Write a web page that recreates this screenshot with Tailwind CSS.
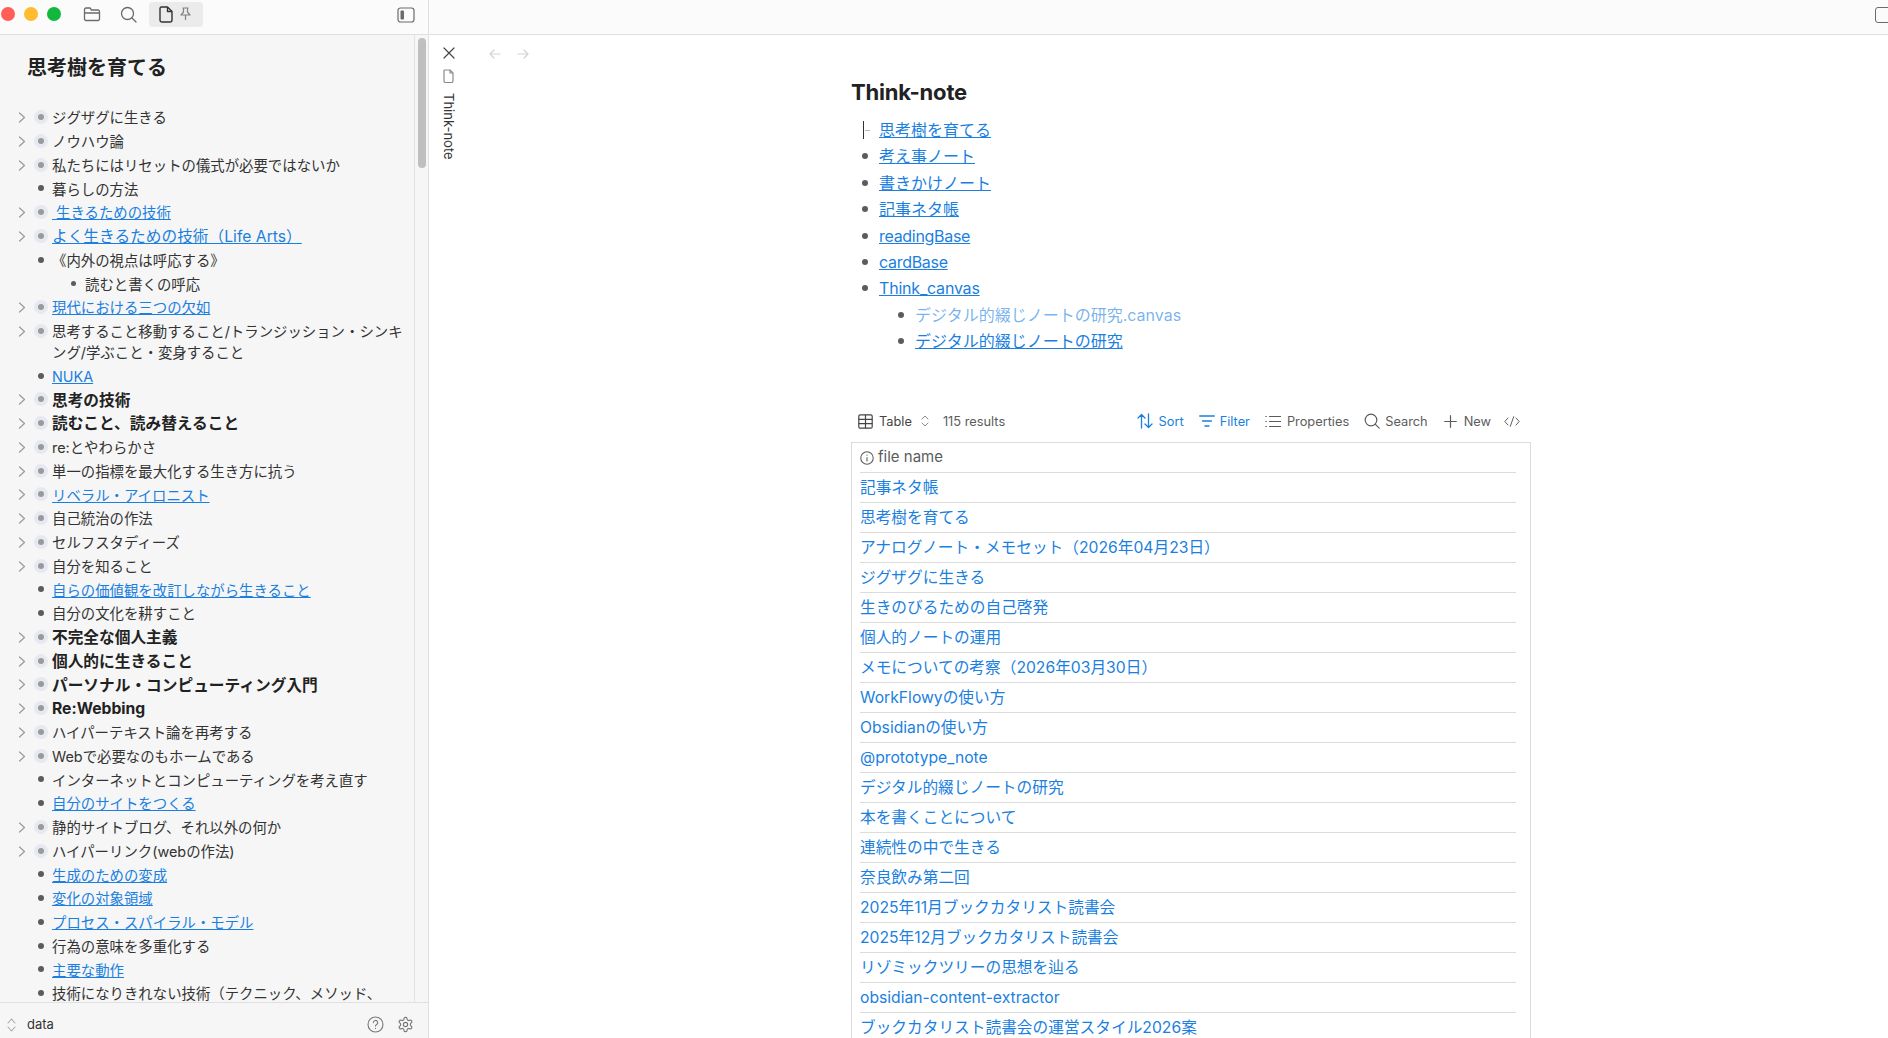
<!DOCTYPE html>
<html lang="ja">
<head>
    <meta charset="UTF-8"/>
    <script src="https://cdn.jsdelivr.net/npm/@tailwindcss/browser@4"></script>
    <title>Think-note</title>
</head>
<body class="bg-white overflow-hidden font-['Inter','Noto_Sans_CJK_JP',sans-serif] text-[#222]">
<div class="flex h-[1038px] w-[1888px] overflow-hidden">
    <aside class="w-[429px] shrink-0 h-full flex flex-col bg-[#f6f6f6] border-r border-[#e0e0e0]">
        <div class="h-[35px] shrink-0 pb-[6px] bg-[#fbfbfb] border-b border-[#e0e0e0] flex items-center relative">
            <span class="ml-[1px] w-[14px] h-[14px] rounded-full bg-[#ff5f57]"></span>
            <span class="ml-[9px] w-[14px] h-[14px] rounded-full bg-[#febc2e]"></span>
            <span class="ml-[9px] w-[14px] h-[14px] rounded-full bg-[#12b83c]"></span>
            <svg class="ml-[22px] w-[18px] h-[18px]" viewBox="0 0 18 18" fill="none" stroke="#6b6b6b" stroke-width="1.3" stroke-linejoin="round"><path d="M1.5 5V14a1.5 1.5 0 0 0 1.5 1.5h12a1.5 1.5 0 0 0 1.5-1.5V6.5A1.5 1.5 0 0 0 15 5H8.5L7 3H3A1.5 1.5 0 0 0 1.5 4.5V8h15"/></svg>
            <svg class="ml-[19px] w-[17px] h-[17px]" viewBox="0 0 17 17" fill="none" stroke="#6b6b6b" stroke-width="1.3" stroke-linecap="round"><circle cx="7.5" cy="7.5" r="6"/><path d="M12 12l4 4"/></svg>
            <div class="ml-[12px] w-[54px] h-[25px] rounded-[4px] bg-[#ebebeb] flex items-center pl-[10px]">
                <svg class="w-[14px] h-[17px]" viewBox="0 0 14 17" fill="none" stroke="#333" stroke-width="1.4" stroke-linejoin="round"><path d="M2.5 1h6l4.5 4.5V14a2 2 0 0 1-2 2H3a2 2 0 0 1-2-2V2.5A1.5 1.5 0 0 1 2.5 1z"/><path d="M8.5 1v4.5H13"/></svg>
                <svg class="ml-[7px] w-[11px] h-[14px]" viewBox="0 0 11 14" fill="none" stroke="#808080" stroke-width="1.2" stroke-linejoin="round"><path d="M2.5 1h6M3.5 1v4L1 8h9L7.5 5V1M5.5 8v5"/></svg>
            </div>
            <svg class="absolute left-[397px] top-[7px] w-[18px] h-[16px]" viewBox="0 0 18 16" fill="none"><rect x="1" y="1" width="16" height="14" rx="2.5" stroke="#6b6b6b" stroke-width="1.2"/><rect x="3.5" y="3.5" width="3.5" height="9" rx="1" fill="#6b6b6b"/></svg>
        </div>
        <div class="flex-1 min-h-0 relative overflow-hidden">
            <div class="absolute right-0 top-0 bottom-0 w-[14px] border-l border-[#e3e3e3]">
                <div class="mt-[3px] ml-[3px] w-[8px] h-[130px] rounded-full bg-[#bfbfbf]"></div>
            </div>
            <h1 class="pl-[27px] pt-[19px] text-[20px] leading-[28px] font-bold text-[#222]">思考樹を育てる</h1>
            <div id="outline" class="pt-[24px] pr-[22px]"></div>
        </div>
        <div class="h-[36px] shrink-0 pt-[8px] border-t border-[#e0e0e0] flex items-center bg-[#f6f6f6]">
            <svg class="ml-[7px] w-[9px] h-[14px]" viewBox="0 0 9 14" fill="none" stroke="#a8a8a8" stroke-width="1.1" stroke-linecap="round" stroke-linejoin="round"><path d="M1 5l3.5-4L8 5M1 9l3.5 4L8 9"/></svg>
            <span class="ml-[11px] text-[13px] text-[#333]">data</span>
            <svg class="ml-auto w-[17px] h-[17px]" viewBox="0 0 17 17" fill="none" stroke="#777" stroke-width="1.1" stroke-linecap="round"><circle cx="8.5" cy="8.5" r="7.5"/><path d="M6.3 6.6a2.2 2.2 0 1 1 3.3 1.9c-.7.4-1.1.8-1.1 1.6"/><path d="M8.5 12.4v.1"/></svg>
            <svg class="ml-[13px] mr-[14px] w-[17px] h-[17px]" viewBox="0 0 24 24" fill="none" stroke="#777" stroke-width="1.6" stroke-linecap="round" stroke-linejoin="round"><path d="M12.22 2h-.44a2 2 0 0 0-2 2v.18a2 2 0 0 1-1 1.73l-.43.25a2 2 0 0 1-2 0l-.15-.08a2 2 0 0 0-2.73.73l-.22.38a2 2 0 0 0 .73 2.73l.15.1a2 2 0 0 1 1 1.72v.51a2 2 0 0 1-1 1.74l-.15.09a2 2 0 0 0-.73 2.73l.22.38a2 2 0 0 0 2.73.73l.15-.08a2 2 0 0 1 2 0l.43.25a2 2 0 0 1 1 1.73V20a2 2 0 0 0 2 2h.44a2 2 0 0 0 2-2v-.18a2 2 0 0 1 1-1.73l.43-.25a2 2 0 0 1 2 0l.15.08a2 2 0 0 0 2.73-.73l.22-.39a2 2 0 0 0-.73-2.73l-.15-.08a2 2 0 0 1-1-1.74v-.5a2 2 0 0 1 1-1.74l.15-.09a2 2 0 0 0 .73-2.73l-.22-.38a2 2 0 0 0-2.73-.73l-.15.08a2 2 0 0 1-2 0l-.43-.25a2 2 0 0 1-1-1.73V4a2 2 0 0 0-2-2z"/><circle cx="12" cy="12" r="3"/></svg>
        </div>
    </aside>

    <main class="flex-1 min-w-0 h-full flex flex-col">
        <div class="h-[35px] shrink-0 bg-[#fbfbfb] border-b border-[#e0e0e0] overflow-hidden">
            <div class="ml-[1446px] mt-[7px] w-[20px] h-[16px] rounded-[3px] border-[1.5px] border-[#6b6b6b]"></div>
        </div>
        <div class="flex-1 min-h-0 flex overflow-hidden">
            <div class="w-[40px] shrink-0 flex flex-col items-center pt-[12px] pr-[1px]">
                <svg class="w-[12px] h-[12px]" viewBox="0 0 12 12" fill="none" stroke="#444" stroke-width="1.2" stroke-linecap="round"><path d="M1 1l10 10M11 1L1 11"/></svg>
                <svg class="mt-[10px] w-[11px] h-[14px]" viewBox="0 0 11 14" fill="none" stroke="#8a8a8a" stroke-width="1.2" stroke-linejoin="round"><path d="M2 1h5l3 3v8a1.5 1.5 0 0 1-1.5 1.5h-6A1.5 1.5 0 0 1 1 12V2a1 1 0 0 1 1-1z"/><path d="M7 1v3h3"/></svg>
                <span class="mt-[10px] [writing-mode:vertical-rl] text-[13px] leading-[16px] text-[#333]">Think-note</span>
            </div>
            <div class="flex-1 min-w-0 relative">
                <div class="absolute left-[20px] top-[13px] flex gap-[16px]">
                    <svg class="w-[12px] h-[12px]" viewBox="0 0 12 12" fill="none" stroke="#d4d4d4" stroke-width="1.2" stroke-linecap="round" stroke-linejoin="round"><path d="M11 6H1M5 2L1 6l4 4"/></svg>
                    <svg class="w-[12px] h-[12px]" viewBox="0 0 12 12" fill="none" stroke="#d4d4d4" stroke-width="1.2" stroke-linecap="round" stroke-linejoin="round"><path d="M1 6h10M7 2l4 4-4 4"/></svg>
                </div>
                <div class="ml-[382px] w-[680px]">
                    <h2 class="pt-[42px] text-[22px] leading-[30px] font-bold text-[#222] tracking-[-0.2px]">Think-note</h2>
                    <ul class="mt-[10px] text-[16px] leading-[26.4px]">
                        <li class="relative pl-[28px]"><span class="absolute left-[12px] top-[4px] w-[1px] h-[18px] bg-[#333]"></span><span class="absolute left-[14px] top-[13px] w-[5px] h-[1px] bg-[#bbb]"></span><a class="text-[#1a7fe0] underline">思考樹を育てる</a></li>
                        <li class="relative pl-[28px]"><span class="absolute left-[11px] top-[10px] w-[6px] h-[6px] rounded-full bg-[#5c5c5c]"></span><a class="text-[#1a7fe0] underline">考え事ノート</a></li>
                        <li class="relative pl-[28px]"><span class="absolute left-[11px] top-[10px] w-[6px] h-[6px] rounded-full bg-[#5c5c5c]"></span><a class="text-[#1a7fe0] underline">書きかけノート</a></li>
                        <li class="relative pl-[28px]"><span class="absolute left-[11px] top-[10px] w-[6px] h-[6px] rounded-full bg-[#5c5c5c]"></span><a class="text-[#1a7fe0] underline">記事ネタ帳</a></li>
                        <li class="relative pl-[28px]"><span class="absolute left-[11px] top-[10px] w-[6px] h-[6px] rounded-full bg-[#5c5c5c]"></span><a class="text-[#1a7fe0] underline tracking-[-0.3px]">readingBase</a></li>
                        <li class="relative pl-[28px]"><span class="absolute left-[11px] top-[10px] w-[6px] h-[6px] rounded-full bg-[#5c5c5c]"></span><a class="text-[#1a7fe0] underline tracking-[-0.3px]">cardBase</a></li>
                        <li class="relative pl-[28px]"><span class="absolute left-[11px] top-[10px] w-[6px] h-[6px] rounded-full bg-[#5c5c5c]"></span><a class="text-[#1a7fe0] underline tracking-[-0.2px]">Think_canvas</a></li>
                        <li class="relative pl-[64px]"><span class="absolute left-[47px] top-[10px] w-[6px] h-[6px] rounded-full bg-[#5c5c5c]"></span><a class="text-[#1a7fe0]/60">デジタル的綴じノートの研究.canvas</a></li>
                        <li class="relative pl-[64px]"><span class="absolute left-[47px] top-[10px] w-[6px] h-[6px] rounded-full bg-[#5c5c5c]"></span><a class="text-[#1a7fe0] underline">デジタル的綴じノートの研究</a></li>
                    </ul>

                    <div class="mt-[51.5px] h-[30px] flex items-center text-[12.8px] text-[#5c5c5c]">
                        <svg class="ml-[7px] w-[15px] h-[15px]" viewBox="0 0 15 15" fill="none" stroke="#444" stroke-width="1.2"><rect x="0.8" y="0.8" width="13.4" height="13.4" rx="1.5"/><path d="M0.8 5.3h13.4M0.8 9.7h13.4M7.5 0.8v13.4"/></svg>
                        <span class="ml-[6px] text-[#444]">Table</span>
                        <svg class="ml-[9px] w-[8px] h-[12px]" viewBox="0 0 8 12" fill="none" stroke="#888" stroke-width="1" stroke-linecap="round" stroke-linejoin="round"><path d="M1 4l3-3 3 3M1 8l3 3 3-3"/></svg>
                        <span class="ml-[14px]">115 results</span>

                        <svg class="ml-auto w-[16px] h-[16px]" viewBox="0 0 16 16" fill="none" stroke="#1a7fe0" stroke-width="1.3" stroke-linecap="round" stroke-linejoin="round"><path d="M4.5 15V1.5M1 5l3.5-3.5L8 5M11.5 1v13.5M8 11l3.5 3.5L15 11"/></svg>
                        <span class="ml-[6px] text-[#1a7fe0]">Sort</span>
                        <svg class="ml-[15px] w-[16px] h-[12px]" viewBox="0 0 16 12" fill="none" stroke="#1a7fe0" stroke-width="1.3" stroke-linecap="round"><path d="M0.7 1h14.6M3.5 6h9M6 11h4"/></svg>
                        <span class="ml-[5px] text-[#1a7fe0]">Filter</span>
                        <svg class="ml-[15px] w-[16px] h-[13px]" viewBox="0 0 16 13" fill="none" stroke="#5c5c5c" stroke-width="1.2" stroke-linecap="round"><path d="M4.5 1.5h11M4.5 6.5h11M4.5 11.5h11M0.8 1.5h.5M0.8 6.5h.5M0.8 11.5h.5"/></svg>
                        <span class="ml-[6px]">Properties</span>
                        <svg class="ml-[15px] w-[16px] h-[16px]" viewBox="0 0 16 16" fill="none" stroke="#5c5c5c" stroke-width="1.2" stroke-linecap="round"><circle cx="7" cy="7" r="5.8"/><path d="M11.2 11.2l4 4"/></svg>
                        <span class="ml-[5px]">Search</span>
                        <svg class="ml-[16px] w-[13px] h-[13px]" viewBox="0 0 13 13" fill="none" stroke="#5c5c5c" stroke-width="1.2" stroke-linecap="round"><path d="M6.5 0.7v11.6M0.7 6.5h11.6"/></svg>
                        <span class="ml-[7px]">New</span>
                        <svg class="ml-[13px] mr-[11px] w-[16px] h-[11px]" viewBox="0 0 16 11" fill="none" stroke="#5c5c5c" stroke-width="1" stroke-linecap="round" stroke-linejoin="round"><path d="M4 2L0.8 5.5 4 9M12 2l3.2 3.5L12 9M9.7 0.7L6.3 10.3"/></svg>
                    </div>

                    <div class="mt-[6px] border border-[#dcdcdc] pl-[8px] pr-[14px] text-[15.7px]">
                        <div class="h-[30px] flex items-center border-b border-[#dcdcdc] text-[#5c5c5c]">
                            <svg class="w-[14px] h-[14px]" viewBox="0 0 13 13" fill="none" stroke="#5c5c5c" stroke-width="1" stroke-linecap="round"><circle cx="6.5" cy="6.5" r="5.8"/><path d="M6.5 6v3.3M6.5 3.8v.1"/></svg>
                            <span class="ml-[4px] text-[15px]">file name</span>
                        </div>
                        <div id="rows"></div>
                    </div>
                </div>
            </div>
        </div>
    </main>
</div>

<script type="module">
  // c: has children, l: link, b: bold, w: larger text, i: nested
  const outline = [
    ['ジグザグに生きる', 'c'],
    ['ノウハウ論', 'c'],
    ['私たちにはリセットの儀式が必要ではないか', 'c'],
    ['暮らしの方法', ''],
    ['\u00a0生きるための技術', 'cl'],
    ['よく生きるための技術（Life Arts）', 'clw'],
    ['《内外の視点は呼応する》', ''],
    ['読むと書くの呼応', 'i'],
    ['現代における三つの欠如', 'cl'],
    ['思考すること移動すること/トランジッション・シンキング/学ぶこと・変身すること', 'c'],
    ['NUKA', 'l'],
    ['思考の技術', 'cbw'],
    ['読むこと、読み替えること', 'cbw'],
    ['re:とやわらかさ', 'c'],
    ['単一の指標を最大化する生き方に抗う', 'c'],
    ['リベラル・アイロニスト', 'cl'],
    ['自己統治の作法', 'c'],
    ['セルフスタディーズ', 'c'],
    ['自分を知ること', 'c'],
    ['自らの価値観を改訂しながら生きること', 'l'],
    ['自分の文化を耕すこと', ''],
    ['不完全な個人主義', 'cbw'],
    ['個人的に生きること', 'cbw'],
    ['パーソナル・コンピューティング入門', 'cbw'],
    ['Re:Webbing', 'cbw'],
    ['ハイパーテキスト論を再考する', 'c'],
    ['Webで必要なのもホームである', 'c'],
    ['インターネットとコンピューティングを考え直す', ''],
    ['自分のサイトをつくる', 'l'],
    ['静的サイトブログ、それ以外の何か', 'c'],
    ['ハイパーリンク(webの作法)', 'c'],
    ['生成のための変成', 'l'],
    ['変化の対象領域', 'l'],
    ['プロセス・スパイラル・モデル', 'l'],
    ['行為の意味を多重化する', ''],
    ['主要な動作', 'l'],
    ['技術になりきれない技術（テクニック、メソッド、', ''],
  ];

  const chevron = `<svg class="absolute left-[18px] top-[6px] w-[8px] h-[11px]" viewBox="0 0 8 11" fill="none" stroke="#9a9a9a" stroke-width="1.2" stroke-linecap="round" stroke-linejoin="round"><path d="M1.5 1l5 4.5-5 4.5"/></svg>`;
  const halo = `<span class="absolute left-[34px] top-[4px] w-[14px] h-[14px] rounded-full bg-[#e6e8f2] flex items-center justify-center"><span class="w-[6px] h-[6px] rounded-full bg-[#9a9a9a]"></span></span>`;
  const dot = `<span class="absolute left-[38px] top-[8px] w-[6px] h-[6px] rounded-full bg-[#5c5c5c]"></span>`;
  const nestedDot = `<span class="absolute left-[71px] top-[9px] w-[5px] h-[5px] rounded-full bg-[#5c5c5c]"></span>`;

  document.querySelector('#outline').innerHTML = outline.map(([text, flags]) => {
    const isParent = flags.includes('c');
    const nested = flags.includes('i');
    const bullet = isParent ? chevron + halo : nested ? nestedDot : dot;
    let label = text;
    if (flags.includes('l')) label = `<a class="text-[#1a7fe0] underline">${text}</a>`;
    if (flags.includes('b')) label = `<b class="font-bold text-[#222]">${text}</b>`;
    const indent = nested ? 'pl-[85px]' : 'pl-[52px]';
    const size = flags.includes('w') ? 'text-[15.7px]' : 'text-[14.4px]';
    return `<div class="relative ${indent} py-[1.375px] ${size} leading-[21px] text-[#333]">${bullet}${label}</div>`;
  }).join('');

  const files = [
    '記事ネタ帳', '思考樹を育てる', 'アナログノート・メモセット（2026年04月23日）', 'ジグザグに生きる',
    '生きのびるための自己啓発', '個人的ノートの運用', 'メモについての考察（2026年03月30日）', 'WorkFlowyの使い方',
    'Obsidianの使い方', '@prototype_note', 'デジタル的綴じノートの研究', '本を書くことについて', '連続性の中で生きる',
    '奈良飲み第二回', '2025年11月ブックカタリスト読書会', '2025年12月ブックカタリスト読書会',
    'リゾミックツリーの思想を辿る', 'obsidian-content-extractor', 'ブックカタリスト読書会の運営スタイル2026案',
  ];

  document.querySelector('#rows').innerHTML = files.map((name) =>
    `<div class="h-[30px] flex items-center border-b border-[#dcdcdc] text-[#1a7fe0]">${name}</div>`
  ).join('');
</script>
</body>
</html>
